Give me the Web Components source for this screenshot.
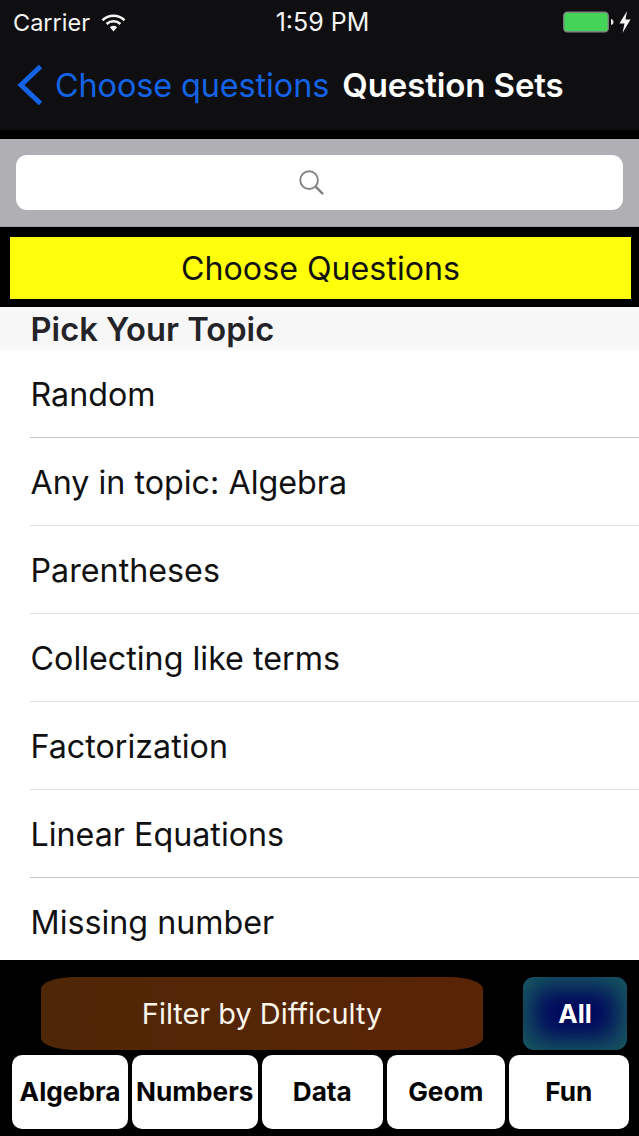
<!DOCTYPE html>
<html>
<head>
<meta charset="utf-8">
<title>Question Sets</title>
<style>
  html, body { margin: 0; height: 100%; background: #000; }
  body { font-family: Inter, "Liberation Sans", sans-serif; }
  app-screen { height: 1136px; }
</style>
</head>
<body>
<app-screen>
  <status-bar slot="top"></status-bar>
  <nav-bar slot="top" back="Choose questions" heading="Question Sets"></nav-bar>
  <search-bar slot="top"></search-bar>
  <choose-banner slot="top">Choose Questions</choose-banner>
  <topic-list heading="Pick Your Topic">
    <topic-row strong>Random</topic-row>
    <topic-row>Any in topic: Algebra</topic-row>
    <topic-row>Parentheses</topic-row>
    <topic-row>Collecting like terms</topic-row>
    <topic-row>Factorization</topic-row>
    <topic-row strong>Linear Equations</topic-row>
    <topic-row>Missing number</topic-row>
  </topic-list>
  <filter-bar slot="bottom"></filter-bar>
  <tab-strip slot="bottom">
    <tab-button style="width:116px">Algebra</tab-button>
    <tab-button style="width:126px">Numbers</tab-button>
    <tab-button style="width:121.5px">Data</tab-button>
    <tab-button style="width:118px">Geom</tab-button>
    <tab-button style="width:120.5px">Fun</tab-button>
  </tab-strip>
</app-screen>

<script>
// small helper so every component has the same setup
class Base extends HTMLElement {
  constructor() {
    super();
    this.shadow = this.attachShadow({ mode: 'open' });
  }
}

class AppScreen extends Base {
  connectedCallback() {
    this.shadow.innerHTML = `
      <style>
        :host { display: flex; flex-direction: column; overflow: hidden; background: #000; }
        main { flex: 1; min-height: 0; display: flex; flex-direction: column; }
      </style>
      <slot name="top"></slot>
      <main><slot></slot></main>
      <slot name="bottom"></slot>`;
  }
}

class StatusBar extends Base {
  connectedCallback() {
    this.shadow.innerHTML = `
      <style>
        :host { display: grid; grid-template-columns: 1fr auto 1fr; align-items: center; height: 44px;
                background: #0f0f11; color: #f4f4f4; font-size: 23.5px; padding: 0 7px 0 13px; box-sizing: border-box; }
        .left { display: flex; align-items: center; gap: 11px; }
        .right { display: flex; align-items: center; justify-content: flex-end; gap: 2px; }
        .time { font-size: 25px; }
        svg { display: block; }
      </style>
      <div class="left"><span>Carrier</span>
        <svg width="25" height="19" viewBox="0 0 25 19">
          <path d="M1.5 7.2C7.6 1.2 17.4 1.2 23.5 7.2" fill="none" stroke="#f4f4f4" stroke-width="2.6"/>
          <path d="M5.6 11C9.5 7.3 15.5 7.3 19.4 11" fill="none" stroke="#f4f4f4" stroke-width="2.6"/>
          <path d="M8.9 14.2C11 12.4 14 12.4 16.1 14.2L12.5 18.4Z" fill="#f4f4f4"/>
        </svg>
      </div>
      <span class="time">1:59 PM</span>
      <div class="right">
        <svg width="53" height="22" viewBox="0 0 53 22">
          <rect x="0.8" y="1.2" width="44.4" height="19.6" rx="3.5" fill="#44d458" stroke="#7d877e" stroke-width="1.4"/>
          <path d="M48 8C50 8.6 50.5 9.8 50.5 11S50 13.4 48 14Z" fill="#e8e8e8"/>
        </svg>
        <svg width="14" height="24" viewBox="0 0 14 24">
          <path d="M9 1L1.5 13.5H6.5L4.5 23L12.5 9.5H7.5Z" fill="#f4f4f4"/>
        </svg>
      </div>`;
  }
}

class NavBar extends Base {
  connectedCallback() {
    this.shadow.innerHTML = `
      <style>
        :host { display: flex; align-items: center; height: 86px; background: #0f0f11; margin-bottom: 9px;
                padding: 0 0 4px 17px; box-sizing: border-box; font-size: 32.4px; letter-spacing: -.1px; white-space: nowrap; }
        svg { display: block; margin-right: 12px; }
        .back { color: #1463e6; }
        .title { color: #fff; font-size: 33px; font-weight: 600; margin-left: 13px; }
      </style>
      <svg width="26" height="42" viewBox="0 0 26 42">
        <path d="M23.5 2.5L4 21L23.5 39.5" fill="none" stroke="#1463e6" stroke-width="5"/>
      </svg>
      <span class="back">${this.getAttribute('back')}</span>
      <span class="title">${this.getAttribute('heading')}</span>`;
  }
}

class SearchBar extends Base {
  connectedCallback() {
    this.shadow.innerHTML = `
      <style>
        :host { display: block; padding: 16px; background: #b0afb4; border-bottom: 1px solid #9c9ba0; }
        .field { height: 55px; background: #fff; border-radius: 11px; display: flex; align-items: center; justify-content: center; }
        svg { display: block; margin-right: 16px; }
      </style>
      <div class="field">
        <svg width="27" height="27" viewBox="0 0 28 28">
          <circle cx="11.5" cy="11.5" r="9.2" fill="none" stroke="#838387" stroke-width="2"/>
          <path d="M18 18L26 26" stroke="#838387" stroke-width="2.6"/>
        </svg>
      </div>`;
  }
}

class ChooseBanner extends Base {
  connectedCallback() {
    this.shadow.innerHTML = `
      <style>
        :host { display: block; padding: 10px 8px 8px 10px; background: #000; }
        div { height: 62px; background: #ffff0b; color: #111; font-size: 32.2px; display: flex; align-items: center; justify-content: center; }
      </style>
      <div><slot></slot></div>`;
  }
}

class TopicList extends Base {
  connectedCallback() {
    this.shadow.innerHTML = `
      <style>
        :host { display: block; flex: 1; min-height: 0; overflow: hidden; background: #fff; }
        h2 { margin: 0; height: 43px; line-height: 45px; padding-left: 30.5px; background: #f7f7f7;
             color: #242428; font-size: 32.7px; font-weight: 600; }
      </style>
      <h2>${this.getAttribute('heading')}</h2>
      <slot></slot>`;
  }
}

class TopicRow extends Base {
  connectedCallback() {
    this.shadow.innerHTML = `
      <style>
        :host { display: block; padding-left: 30px; }
        div { height: 87px; line-height: 89.5px; color: #111; font-size: 32.25px; text-indent: .5px;
              border-bottom: 1px solid ${this.hasAttribute('strong') ? '#c4c4c6' : '#e2e2e4'}; }
      </style>
      <div><slot></slot></div>`;
  }
}

class FilterBar extends Base {
  connectedCallback() {
    this.shadow.innerHTML = `
      <style>
        :host { display: flex; justify-content: space-between; height: 73px; margin-top: 17px;
                padding: 0 12px 0 41px; background: #000; }
        .filter { width: 442px; display: flex; align-items: center; justify-content: center; color: #fbf5ea;
                  font-size: 28.9px; background: linear-gradient(90deg, #4f2706, #5a2406); border-radius: 34px / 12px; }
        .all { width: 104px; display: flex; align-items: center; justify-content: center; color: #fff;
               font-size: 26px; font-weight: 700; box-sizing: border-box; background: #00085e;
               border-radius: 11px; box-shadow: inset 0 0 26px 10px #17595f; }
      </style>
      <div class="filter">Filter by Difficulty</div>
      <div class="all">All</div>`;
  }
}

class TabStrip extends Base {
  connectedCallback() {
    this.shadow.innerHTML = `
      <style>
        :host { display: flex; gap: 3.75px; margin: 5px 0 7px; padding-left: 12px; height: 74px; background: #000; }
      </style>
      <slot></slot>`;
  }
}

class TabButton extends Base {
  connectedCallback() {
    this.shadow.innerHTML = `
      <style>
        :host { display: flex; align-items: center; justify-content: center; background: #fff; border-radius: 10px;
                color: #050505; font-size: 26.2px; font-weight: 700; white-space: nowrap; padding-bottom: 2px; box-sizing: border-box; }
      </style>
      <slot></slot>`;
  }
}

customElements.define('app-screen', AppScreen);
customElements.define('status-bar', StatusBar);
customElements.define('nav-bar', NavBar);
customElements.define('search-bar', SearchBar);
customElements.define('choose-banner', ChooseBanner);
customElements.define('topic-list', TopicList);
customElements.define('topic-row', TopicRow);
customElements.define('filter-bar', FilterBar);
customElements.define('tab-strip', TabStrip);
customElements.define('tab-button', TabButton);
</script>
</body>
</html>
